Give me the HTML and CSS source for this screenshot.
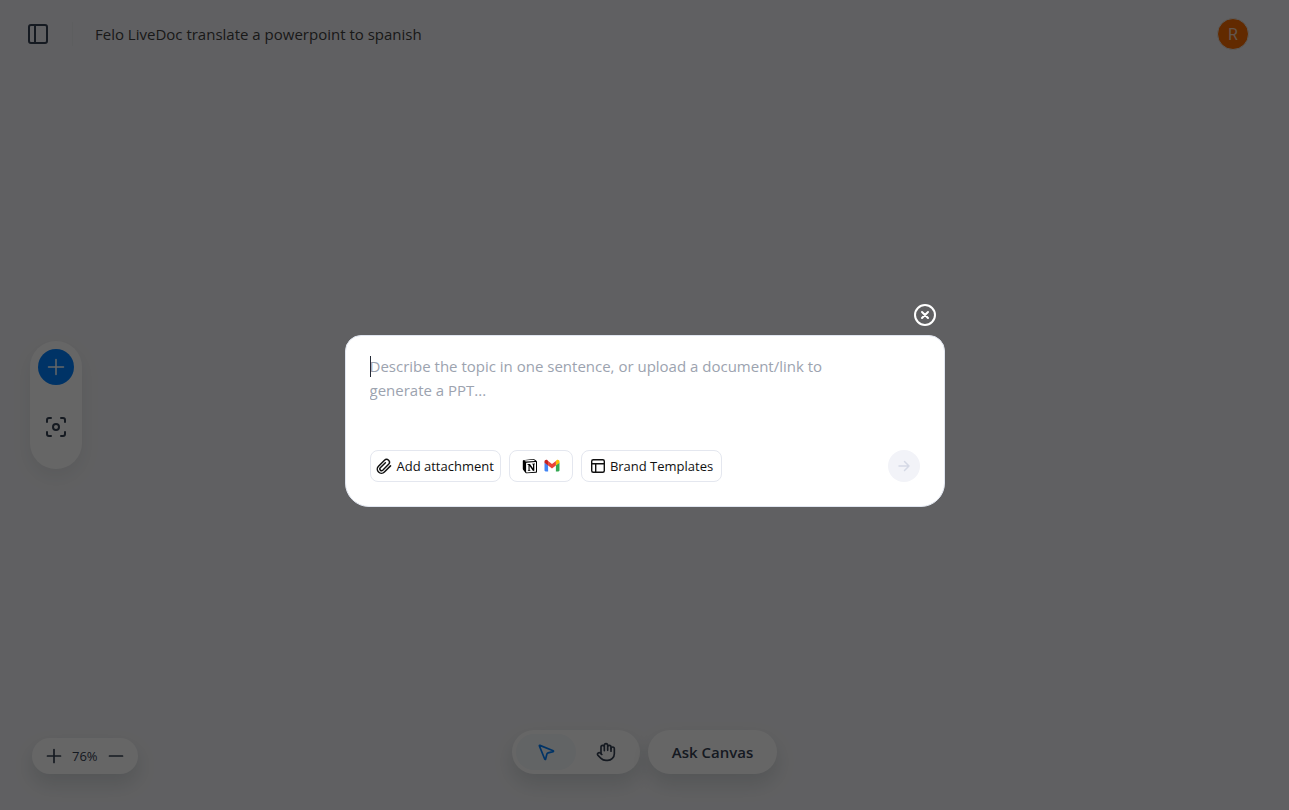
FILE: index.html
```html
<!DOCTYPE html>
<html lang="en">
<head>
<meta charset="utf-8">
<meta name="viewport" content="width=device-width, initial-scale=1">
<title>Felo LiveDoc</title>
<link rel="stylesheet" href="styles.css">
</head>
<body>
<div class="workspace">
  <header class="topbar">
    <button class="icon-button" type="button" aria-label="Toggle sidebar">
      <svg class="icon-24" viewBox="0 0 24 24" fill="none" stroke="currentColor" stroke-width="2"><rect x="3" y="3" width="18" height="18" rx="2"/><path d="M9 3v18"/></svg>
    </button>
    <span class="divider"></span>
    <h1 class="doc-title">Felo LiveDoc translate a powerpoint to spanish</h1>
    <button class="avatar" type="button" aria-label="Account">R</button>
  </header>

  <nav class="side-tools" aria-label="Canvas tools">
    <button class="add-button" type="button" aria-label="Add">
      <svg class="icon-20" viewBox="0 0 20 20" fill="none" stroke="currentColor" stroke-width="1.5" stroke-linecap="round"><path d="M10 2.5v15M2.5 10h15"/></svg>
    </button>
    <button class="icon-button" type="button" aria-label="Fit to view">
      <svg class="icon-24" viewBox="0 0 24 24" fill="none" stroke="currentColor" stroke-width="2" stroke-linecap="round" stroke-linejoin="round"><circle cx="12" cy="12" r="3"/><path d="M3 7V5a2 2 0 0 1 2-2h2M17 3h2a2 2 0 0 1 2 2v2M21 17v2a2 2 0 0 1-2 2h-2M7 21H5a2 2 0 0 1-2-2v-2"/></svg>
    </button>
  </nav>

  <footer class="bottombar">
    <div class="zoom pill">
      <button class="icon-button" type="button" aria-label="Zoom in">
        <svg class="icon-20" viewBox="0 0 20 20" fill="none" stroke="currentColor" stroke-width="1.7" stroke-linecap="round"><path d="M10 3.5v13M3.5 10h13"/></svg>
      </button>
      <span class="zoom-value">76%</span>
      <button class="icon-button" type="button" aria-label="Zoom out">
        <svg class="icon-20" viewBox="0 0 20 20" fill="none" stroke="currentColor" stroke-width="1.7" stroke-linecap="round"><path d="M3.5 10h13"/></svg>
      </button>
    </div>
    <div class="modes">
      <div class="mode-switch pill">
        <button class="mode mode-active" type="button" aria-label="Select">
          <svg class="icon-20" viewBox="0 0 24 24" fill="none" stroke="currentColor" stroke-width="2" stroke-linejoin="round"><path d="M4.04 4.69a.5.5 0 0 1 .65-.65l16 6.5a.5.5 0 0 1-.06.95l-6.13 1.58a2 2 0 0 0-1.43 1.43l-1.58 6.13a.5.5 0 0 1-.95.06z"/></svg>
        </button>
        <button class="mode" type="button" aria-label="Pan">
          <svg class="icon-20" viewBox="0 0 24 24" fill="none" stroke="currentColor" stroke-width="2" stroke-linecap="round" stroke-linejoin="round"><path d="M18 11V6a2 2 0 0 0-4 0M14 10V4a2 2 0 0 0-4 0v2M10 10.500V6a2 2 0 0 0-4 0v8"/><path d="M18 8a2 2 0 1 1 4 0v6a8 8 0 0 1-8 8h-2c-2.800 0-4.500-.86-5.990-2.340l-3.600-3.600a2 2 0 0 1 2.830-2.820L7 15"/></svg>
        </button>
      </div>
      <button class="ask pill" type="button">Ask Canvas</button>
    </div>
  </footer>
</div>

<div class="overlay">
  <section class="dialog" role="dialog" aria-modal="true" aria-label="Generate a presentation">
    <button class="close" type="button" aria-label="Close">
      <svg class="icon-24" viewBox="0 0 24 24" fill="none" stroke="currentColor" stroke-width="2" stroke-linecap="round"><circle cx="12" cy="12" r="10"/><path d="M9 9l6 6M15 9l-6 6"/></svg>
    </button>
    <form class="card">
      <div class="prompt-box">
        <textarea class="prompt" aria-label="Topic" placeholder="Describe the topic in one sentence, or upload a document/link to generate a PPT..."></textarea>
        <span class="caret"></span>
      </div>
      <div class="actions">
        <button class="chip chip-attach" type="button">
          <svg class="icon-16" viewBox="0 0 16 16" fill="none" stroke="currentColor" stroke-width="1.5" stroke-linecap="round" stroke-linejoin="round"><path d="M14.500 7.900 8.400 14a4.100 4.100 0 0 1-5.900-5.800l6-6a2.900 2.900 0 0 1 4.100 4.100l-5.900 5.900a1.700 1.700 0 0 1-2.400-2.400l5.100-5.100"/></svg>
          <span>Add attachment</span>
        </button>
        <button class="chip chip-sources" type="button" aria-label="Import from Notion or Gmail">
          <svg class="icon-16" viewBox="0 0 16 16"><path d="M1 2.200 10.900 1c1 0 1.500.2 2.200.7l1.500 1.200c.4.300.4.600.4 1v9.600c0 .8-.3 1.200-1.200 1.300l-9 .5c-.7 0-1-.1-1.400-.6L1.300 12c-.3-.5-.5-.8-.5-1.300V2.900z" fill="#000"/><path d="M2.200 2.500 10.700 1.800c.8 0 1 0 1.500.4l.9.700-8.700.6c-.5 0-.7 0-1-.3zM4.500 4.700l9.100-.6c.3 0 .4.200.4.500v8.700c0 .4-.1.500-.5.500l-8.800.6c-.4 0-.6-.2-.6-.6V5.300c0-.4.100-.6.400-.6z" fill="#fff"/><path d="M5.500 6.100 8 6l3 4.300V6.500l-.9-.2v-.5l2.900-.2v.5l-.7.300v6.300l-1.300.2-3.400-5v4.200l1 .3v.4l-2.800.2v-.5l.7-.3V6.900l-1-.2z" fill="#000"/></svg>
          <svg class="icon-16" viewBox="0 0 16 16"><path d="M.5 4.500v7.800c0 .6.500 1.100 1.100 1.100h2.500V7z" fill="#4285f4"/><path d="M11.900 7v6.400h2.500c.6 0 1.100-.5 1.100-1.100V4.500z" fill="#34a853"/><path d="M11.900 3v4.500l3.600-2.700V3.500c0-1.500-1.700-2.300-2.800-1.400z" fill="#fbbc04"/><path d="M4.100 7.500V3L8 5.900 11.900 3v4.500L8 10.400z" fill="#ea4335"/><path d="M.5 3.500v1.300l3.600 2.700V3l-.8-.9C2.200 1.200.5 2 .5 3.500z" fill="#c5221f"/></svg>
        </button>
        <button class="chip chip-brand" type="button">
          <svg class="icon-16" viewBox="0 0 16 16" fill="none" stroke="currentColor" stroke-width="1.400"><rect x="1.700" y="1.700" width="12.600" height="12.600" rx="1.500"/><path d="M1.700 5.700h12.600M5.700 5.700v8.600"/></svg>
          <span>Brand Templates</span>
        </button>
        <button class="send" type="submit" aria-label="Send" disabled>
          <svg class="icon-16" viewBox="0 0 16 16" fill="none" stroke="currentColor" stroke-width="1.500" stroke-linecap="round" stroke-linejoin="round"><path d="M3 8h10M8.500 3.500 13 8l-4.500 4.500"/></svg>
        </button>
      </div>
    </form>
  </section>
</div>
</body>
</html>
```
FILE: styles.css
```css
* { box-sizing: border-box; }

body {
  margin: 0;
  font-family: "Segoe UI", "Open Sans", "Noto Sans", sans-serif;
  color: #364153;
}

button {
  display: flex;
  align-items: center;
  justify-content: center;
  padding: 0;
  border: 0;
  background: none;
  color: inherit;
  font: inherit;
}

svg { display: block; flex: none; }
.icon-16 { width: 16px; height: 16px; }
.icon-20 { width: 20px; height: 20px; }
.icon-24 { width: 24px; height: 24px; }

.workspace {
  display: grid;
  grid-template-rows: auto 1fr auto;
  min-height: 100vh;
  background: #f1f1f4;
}

.topbar {
  grid-area: 1 / 1;
  display: flex;
  align-items: center;
  height: 68px;
  padding: 0 40px 0 26px;
}

.divider {
  width: 1px;
  height: 24px;
  margin: 0 22px;
  background: #e8eaee;
}

.doc-title {
  flex: 1;
  margin: 0;
  color: #404040;
  font-size: 15px;
  font-weight: 400;
  line-height: 24px;
}

.avatar {
  width: 32px;
  height: 32px;
  border: 1px solid #e4e4e7;
  border-radius: 50%;
  background: #f56a00;
  color: #f4d5c0;
  font-family: Roboto, sans-serif;
  font-size: 16px;
}

.side-tools {
  grid-area: 1 / 1 / 4 / 2;
  place-self: center start;
  display: flex;
  flex-direction: column;
  align-items: center;
  gap: 30px;
  width: 52px;
  margin-left: 30px;
  padding: 8px 0 30px;
  border-radius: 26px;
  background: #fff;
  box-shadow: 0 8px 20px rgba(24, 48, 48, 0.08);
}

.add-button {
  width: 36px;
  height: 36px;
  border-radius: 50%;
  background: #0080ff;
  color: #fff;
}

.bottombar {
  grid-area: 3 / 1;
  display: grid;
  grid-template-columns: 1fr auto 1fr;
  align-items: end;
  padding: 0 32px 36px;
}

.pill {
  border-radius: 22px;
  background: #fff;
  box-shadow: 0 10px 20px rgba(24, 48, 48, 0.14);
}

.zoom {
  justify-self: start;
  display: flex;
  align-items: center;
  gap: 8px;
  height: 36px;
  padding: 0 12px;
}

.zoom-value { font-size: 13px; font-weight: 500; }

.modes { display: flex; gap: 8px; }

.mode-switch {
  display: flex;
  height: 44px;
  padding: 4px;
}

.mode { width: 60px; border-radius: 18px; }
.mode-active { background: #f5f9fc; color: #0080ff; }

.ask {
  height: 44px;
  padding: 0 24px;
  font-size: 15px;
  font-weight: 600;
}

.overlay {
  position: fixed;
  inset: 0;
  display: flex;
  align-items: center;
  justify-content: center;
  padding: 16px;
  background: rgba(0, 0, 0, 0.6);
}

.dialog {
  display: flex;
  flex-direction: column;
  gap: 8px;
  width: 100%;
  max-width: 600px;
}

.close {
  align-self: flex-end;
  margin-right: 8px;
  color: #fff;
}

.card {
  padding: 18px 24px 24px;
  border: 1px solid #e1e6f0;
  border-radius: 16px 16px 24px 24px;
  background: #fff;
}

.prompt-box { position: relative; }

.prompt {
  display: block;
  width: 100%;
  height: 96px;
  padding: 0 72px 0 0;
  border: 0;
  outline: 0;
  resize: none;
  background: none;
  color: #252b37;
  font: inherit;
  font-size: 15px;
  line-height: 24px;
}

.prompt::placeholder { color: #9ca3af; opacity: 1; }

.caret {
  position: absolute;
  top: 2px;
  left: 0;
  width: 1px;
  height: 21px;
  background: #252b37;
}

.actions {
  display: flex;
  align-items: center;
  gap: 8px;
}

.chip {
  gap: 4px;
  height: 32px;
  border: 1px solid #e4e7ef;
  border-radius: 8px;
  color: #111;
  font-size: 13px;
  white-space: nowrap;
}

.chip-attach { gap: 5px; padding: 0 6px 0 5px; }
.chip-sources { width: 64px; gap: 6px; }
.chip-brand { padding: 0 8px; }

.send {
  width: 32px;
  height: 32px;
  margin-left: auto;
  border-radius: 50%;
  background: #f2f3f8;
  color: #d5d9e5;
}
```
